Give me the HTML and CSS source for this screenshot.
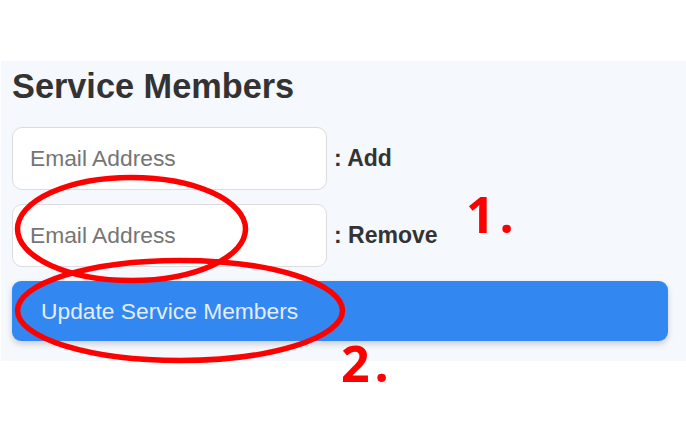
FILE: index.html
```html
<!DOCTYPE html>
<html lang="en">
<head>
<meta charset="utf-8">
<title>Service Members</title>
<link rel="stylesheet" href="styles.css">
</head>
<body>
<section class="panel">
  <h2 class="title">Service Members</h2>
  <div class="row">
    <input class="field" type="email" placeholder="Email Address">
    <span class="label">: Add</span>
  </div>
  <div class="row">
    <input class="field" type="email" placeholder="Email Address">
    <span class="label">: Remove</span>
  </div>
  <button class="submit" type="button">Update Service Members</button>
</section>
<svg class="marks" width="686" height="423" viewBox="0 0 686 423">
  <ellipse class="ring" cx="131.5" cy="229" rx="114" ry="51.5"/>
  <ellipse class="ring" cx="180" cy="310.5" rx="162.5" ry="50"/>
  <text class="num" x="466" y="233">1.</text>
  <text class="num" x="341" y="382">2.</text>
</svg>
</body>
</html>
```
FILE: styles.css
```css
html, body {
  margin: 0;
  padding: 0;
  background: #ffffff;
}
body {
  position: relative;
  width: 686px;
  height: 423px;
  overflow: hidden;
  font-family: "Liberation Sans", Arial, sans-serif;
}
.panel {
  box-sizing: border-box;
  margin: 61px 0 0 1px;
  width: 685px;
  padding: 5px 18px 20px 11px;
  background: #f5f8fd;
  display: flex;
  flex-direction: column;
  gap: 14px;
}
.title {
  margin: 0 0 7px;
  font-size: 34.3px;
  line-height: 40px;
  font-weight: 700;
  color: #333333;
}
.row {
  display: flex;
  align-items: center;
  gap: 7px;
}
.field {
  box-sizing: border-box;
  width: 315px;
  height: 63px;
  margin: 0;
  padding: 0 17px;
  border: 1px solid #dcdcdc;
  border-radius: 10px;
  background: #ffffff;
  font-family: "Liberation Sans", Arial, sans-serif;
  font-size: 22.8px;
  color: #333;
  outline: none;
}
.field::placeholder {
  color: #757575;
}
.label {
  font-size: 23px;
  font-weight: 700;
  color: #333333;
}
.submit {
  box-sizing: border-box;
  width: 656px;
  height: 60px;
  margin: 0;
  padding: 0 0 0 29px;
  border: 0;
  border-radius: 9px;
  background: #3287f1;
  color: #e3edfb;
  text-align: left;
  font-family: "Liberation Sans", Arial, sans-serif;
  font-size: 22.8px;
  box-shadow: 0 3px 6px rgba(0, 0, 0, 0.18);
}
.marks {
  position: absolute;
  top: 0;
  left: 0;
  pointer-events: none;
}
.ring {
  fill: none;
  stroke: #ff0000;
  stroke-width: 5.5;
}
.num {
  font-family: "Open Sans", sans-serif;
  font-weight: 700;
  font-size: 50px;
  letter-spacing: 5px;
  fill: #ff0000;
}
```
